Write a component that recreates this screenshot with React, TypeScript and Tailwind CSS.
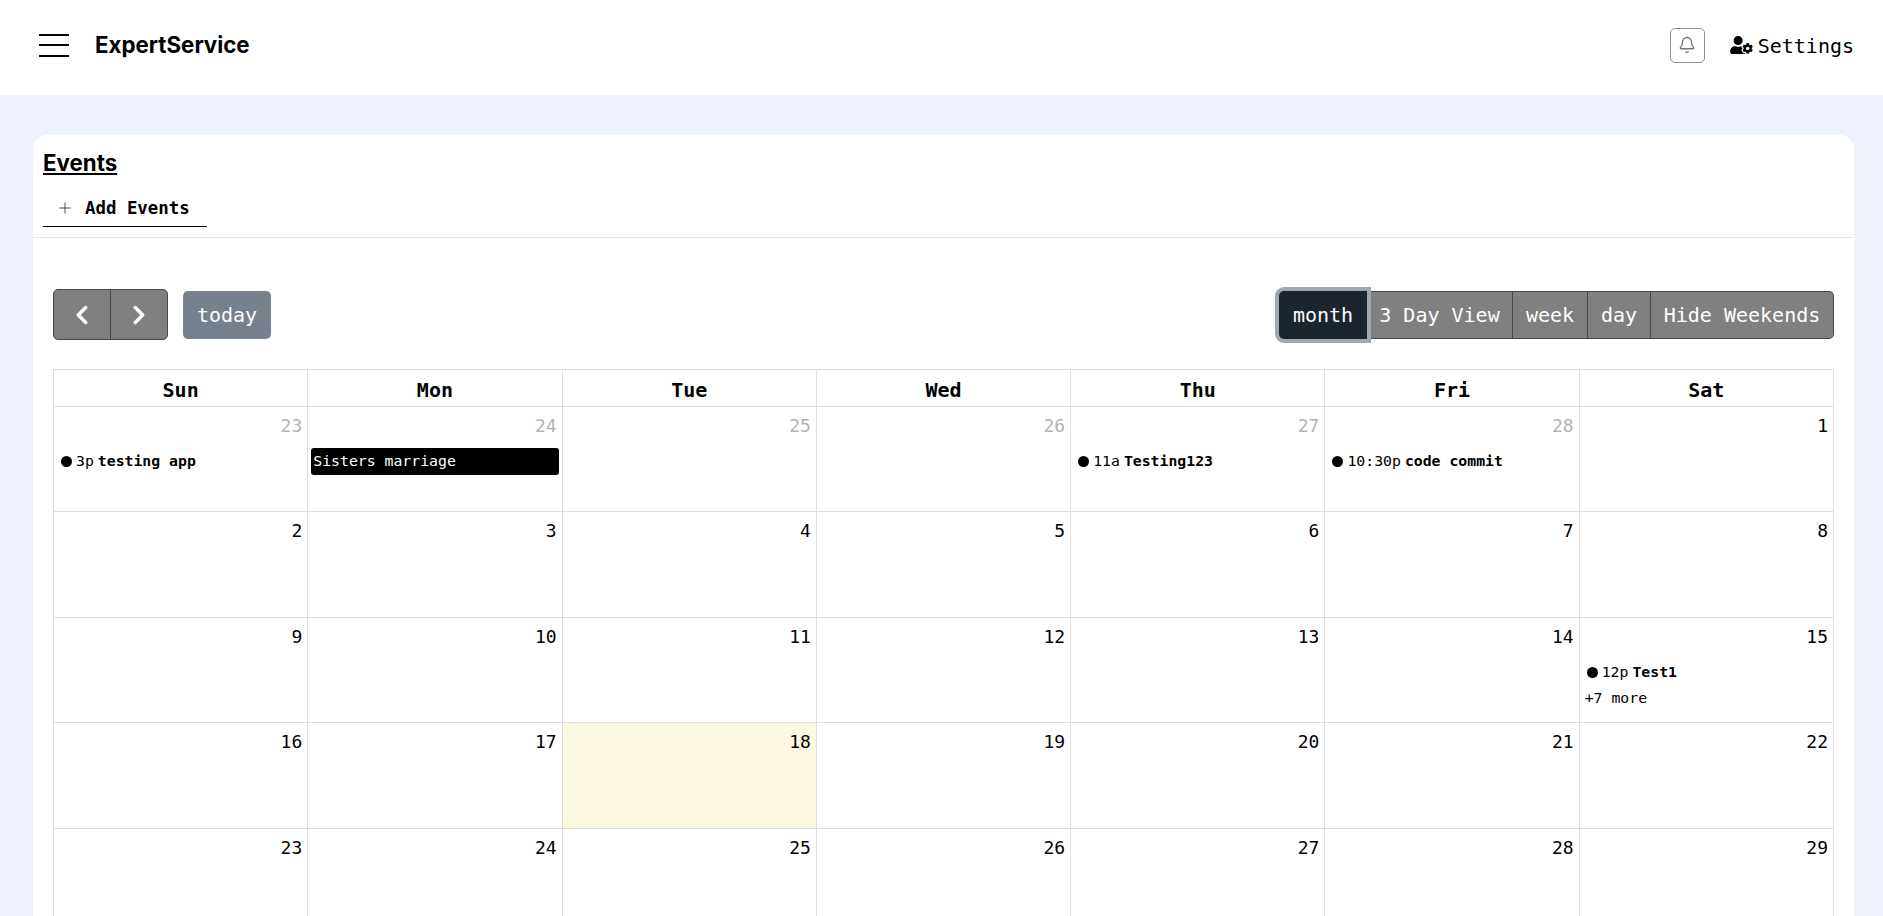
import React from 'react';
import { Bell, ChevronLeft, ChevronRight, Plus } from 'lucide-react';
import { FaUserCog } from 'react-icons/fa';

const mono = "font-['DejaVu_Sans_Mono',monospace]";

type CalEvent = { time?: string; title: string; block?: boolean };
type Day = { n: number; muted?: boolean; today?: boolean; events?: CalEvent[]; more?: string };

const weekdays = ['Sun', 'Mon', 'Tue', 'Wed', 'Thu', 'Fri', 'Sat'];

const days: Day[] = [
  { n: 23, muted: true, events: [{ time: '3p', title: 'testing app' }] },
  { n: 24, muted: true, events: [{ title: 'Sisters marriage', block: true }] },
  { n: 25, muted: true },
  { n: 26, muted: true },
  { n: 27, muted: true, events: [{ time: '11a', title: 'Testing123' }] },
  { n: 28, muted: true, events: [{ time: '10:30p', title: 'code commit' }] },
  { n: 1 },
  { n: 2 }, { n: 3 }, { n: 4 }, { n: 5 }, { n: 6 }, { n: 7 }, { n: 8 },
  { n: 9 }, { n: 10 }, { n: 11 }, { n: 12 }, { n: 13 }, { n: 14 },
  { n: 15, events: [{ time: '12p', title: 'Test1' }], more: '+7 more' },
  { n: 16 }, { n: 17 }, { n: 18, today: true }, { n: 19 }, { n: 20 }, { n: 21 }, { n: 22 },
  { n: 23 }, { n: 24 }, { n: 25 }, { n: 26 }, { n: 27 }, { n: 28 }, { n: 29 },
];

const views = [
  { label: '3 Day View', width: 'w-[146px]' },
  { label: 'week', width: 'w-[75px]' },
  { label: 'day', width: 'w-[63px]' },
  { label: 'Hide Weekends', width: 'w-[183px] rounded-r-[5px]' },
];

function EventRow({ event }: { event: CalEvent }) {
  if (event.block) {
    return (
      <div className="mx-[3px] flex h-[27px] items-center rounded-[3px] bg-black px-[2px] text-[14.8px] text-white">
        {event.title}
      </div>
    );
  }
  return (
    <div className="ml-[7px] flex h-[27px] items-center text-[14.8px] text-black">
      <span className="mr-[4px] h-[11px] w-[11px] rounded-full bg-black" />
      <span className="mr-[4px]">{event.time}</span>
      <span className="font-bold">{event.title}</span>
    </div>
  );
}

function DayCell({ day }: { day: Day }) {
  return (
    <div className={`h-[105.4px] border-r border-b border-[#ddd] ${day.today ? 'bg-[#fdf9e0]' : ''}`}>
      <div className={`h-[41px] pt-[7px] pr-[5px] text-right text-[18px] leading-[24px] ${day.muted ? 'text-[#b3b3b3]' : 'text-black'}`}>
        {day.n}
      </div>
      {day.events?.map((e) => <EventRow key={e.title} event={e} />)}
      {day.more && <div className="ml-[5px] h-[25px] text-[14.8px] leading-[24px] text-black">{day.more}</div>}
    </div>
  );
}

export default function App() {
  return (
    <div className={`h-screen overflow-hidden bg-[#eef2fd] ${mono}`}>
      <header className="flex h-[95px] items-center justify-between bg-white pr-[29px] pb-[5px] pl-[39px]">
        <div className="flex items-center">
          <div className="flex h-[23px] w-[30px] flex-col justify-between">
            <span className="h-[2px] bg-black" />
            <span className="h-[2px] bg-black" />
            <span className="h-[2px] bg-black" />
          </div>
          <span className="ml-[26px] font-['Inter',sans-serif] text-[22.3px] font-bold text-black">ExpertService</span>
        </div>
        <div className="flex items-center">
          <button className="flex h-[35px] w-[35px] items-center justify-center rounded-[5px] border border-[#8f8f8f]">
            <Bell className="h-[18px] w-[18px] text-[#777]" strokeWidth={1.75} />
          </button>
          <FaUserCog className="ml-[25px] h-[18px] w-[23px] text-black" />
          <span className="ml-[5px] pt-[2px] text-[20px] text-black">Settings</span>
        </div>
      </header>

      <main className="mt-[40px] mr-[29px] ml-[33px] rounded-t-[14px] bg-white">
        <div className="border-b border-[#e4e4e4] pt-[13px] pl-[10px]">
          <h1 className="font-['Inter',sans-serif] text-[22.3px] leading-[29px] font-bold text-black underline">Events</h1>
          <div className="mt-[20px] flex h-[30px] w-[164px] items-start border-b border-black pl-[13px] text-[17.4px] font-bold text-black">
            <Plus className="mt-[2px] h-[18px] w-[18px] text-[#444]" strokeWidth={1.25} />
            <span className="ml-[11px] leading-[22px]">Add Events</span>
          </div>
          <div className="h-[10px]" />
        </div>

        <div className="px-[20px] pt-[51px]">
          <div className="flex items-center justify-between">
            <div className="flex items-center">
              <div className="flex h-[51px] overflow-hidden rounded-[5px] border border-[#3f4a55] bg-[#808080] text-white">
                <button className="flex w-[57px] items-center justify-center border-r border-[#3f4a55]">
                  <ChevronLeft className="h-[30px] w-[30px]" strokeWidth={2.75} />
                </button>
                <button className="flex w-[56px] items-center justify-center">
                  <ChevronRight className="h-[30px] w-[30px]" strokeWidth={2.75} />
                </button>
              </div>
              <button className="ml-[15px] h-[48px] w-[88px] rounded-[5px] bg-[#76818d] text-[20px] text-white">today</button>
            </div>
            <div className="flex h-[48px] rounded-[5px] text-[20px] text-white">
              <button className="relative z-10 w-[88px] rounded-l-[5px] bg-[#1a252f] shadow-[0_0_0_4px_#a0a8b0]">month</button>
              {views.map((v) => (
                <button key={v.label} className={`border-y border-r border-[#3f4a55] bg-[#808080] ${v.width}`}>
                  {v.label}
                </button>
              ))}
            </div>
          </div>

          <div className="mt-[29px] grid grid-cols-7 border-t border-l border-[#ddd]">
            {weekdays.map((d) => (
              <div key={d} className="flex h-[37px] items-center justify-center border-r border-b border-[#ddd] pt-[3px] text-[20px] font-bold text-black">
                {d}
              </div>
            ))}
            {days.map((d, i) => <DayCell key={i} day={d} />)}
          </div>
        </div>
      </main>
    </div>
  );
}
